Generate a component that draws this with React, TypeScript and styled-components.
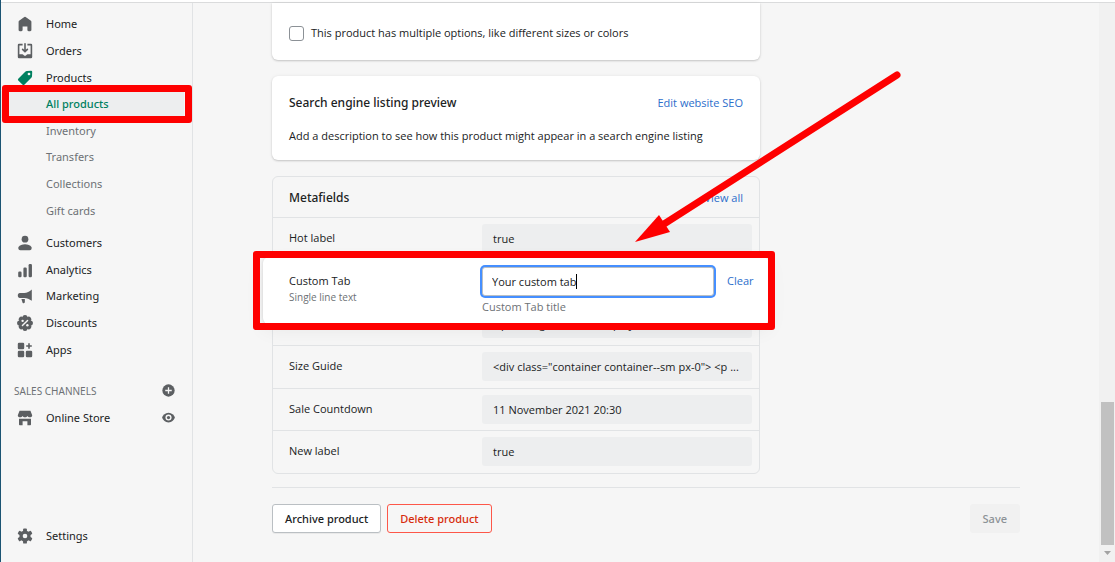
import React from "react";
import styled, { createGlobalStyle } from "styled-components";

const ui = '"Noto Sans", "Open Sans", sans-serif';
const text = '"Open Sans", "Noto Sans", sans-serif';

const GlobalStyle = createGlobalStyle`
  *, *::before, *::after { box-sizing: border-box; }
  body {
    margin: 0;
    background: #f6f6f6;
    color: #202223;
    font: 400 11px/20px ${text};
  }
  h2, p, ul { margin: 0; padding: 0; }
  ul { list-style: none; }
  button, input { font: inherit; color: inherit; }
`;

const Shell = styled.div`
  display: flex;
  flex-direction: column;
  min-height: 100vh;
  border-left: 1px solid #1b5473;
`;

const TopBar = styled.header`
  flex: none;
  height: 3px;
  background: #fff;
  border-bottom: 1px solid #dadbdc;
`;

const Columns = styled.div`
  flex: 1;
  display: flex;
`;

const Sidebar = styled.nav`
  flex: none;
  width: 192px;
  display: flex;
  flex-direction: column;
  padding: 8px 0 13px;
  border-right: 1px solid #e1e3e5;
  font-family: ${ui};
`;

const NavList = styled.ul<{ $height: number }>`
  display: grid;
  grid-auto-rows: 1fr;
  height: ${(p) => p.$height}px;
`;

const NavGroup = styled.div`
  display: flex;
  flex-direction: column;
  gap: 6px;
`;

const NavItem = styled.li`
  position: relative;
  display: flex;
`;

const NavLink = styled.a<{ $sub?: boolean; $selected?: boolean }>`
  flex: 1;
  display: flex;
  align-items: center;
  padding-left: ${(p) => (p.$sub ? 45 : 16)}px;
  margin-right: ${(p) => (p.$selected ? 8 : 0)}px;
  gap: 13px;
  color: ${(p) => (p.$selected ? "#008060" : p.$sub ? "#6d7175" : "#202223")};
  font-weight: ${(p) => (p.$selected ? 500 : 400)};
  background: ${(p) => (p.$selected ? "#edeeef" : "none")};
  text-decoration: none;
`;

const Highlight = styled.span`
  position: absolute;
  inset: -6px 0 -5px 1px;
  border: 7px solid #fe0000;
  border-radius: 3px;
  pointer-events: none;
`;

const Channels = styled.section`
  margin-top: 14px;
`;

const ChannelRow = styled.div`
  display: flex;
  height: 27px;
  align-items: center;
  padding-right: 17px;
`;

const ChannelTitle = styled.h2`
  flex: 1;
  padding-left: 13px;
  font-size: 10px;
  font-weight: 400;
  color: #6d7175;
  text-transform: uppercase;
`;

const IconButton = styled.button`
  display: flex;
  padding: 0;
  border: 0;
  background: none;
`;

const Bottom = styled.div`
  display: flex;
  height: 27px;
  margin-top: auto;
`;

const Icon = styled.svg<{ $green?: boolean; $size?: number }>`
  flex: none;
  width: ${(p) => p.$size ?? 16}px;
  height: ${(p) => p.$size ?? 16}px;
  fill: ${(p) => (p.$green ? "#008060" : "#5c5f62")};
`;

const Main = styled.main`
  flex: 1;
  padding: 0 79px 28px;
`;

const Page = styled.div`
  position: relative;
  max-width: 748px;
  margin: 0 auto;
`;

const Stack = styled.div`
  display: flex;
  flex-direction: column;
  gap: 16px;
  max-width: 488px;
`;

const Card = styled.section<{ $cut?: boolean }>`
  background: #fff;
  padding: ${(p) => (p.$cut ? "20px 17px 17px" : "17px 17px 14px")};
  border-radius: ${(p) => (p.$cut ? "0 0 6px 6px" : "6px")};
  box-shadow: 0 1px 2px rgba(23, 24, 24, 0.2), 0 0 4px rgba(23, 24, 24, 0.05);
`;

const Option = styled.label`
  display: flex;
  align-items: center;
  gap: 7px;
`;

const Checkbox = styled.input`
  appearance: none;
  width: 15px;
  height: 15px;
  margin: 0;
  border: 1px solid #8c9196;
  border-radius: 3px;
  background: #fff;
`;

const Header = styled.div`
  display: flex;
  align-items: center;
  justify-content: space-between;
`;

const Title = styled.h2`
  font: 500 12px/20px ${ui};
`;

const Link = styled.a`
  color: #2c6ecb;
  text-decoration: none;
`;

const Description = styled.p`
  margin-top: 13px;
`;

const Metafields = styled.section`
  border: 1px solid #e1e3e5;
  border-radius: 6px;

  ${Header} {
    height: 40px;
    padding: 2px 16px 0;
  }
`;

const FieldList = styled.ul`
  display: grid;
  grid-auto-rows: 1fr;
  height: 256px;
`;

const Field = styled.li`
  position: relative;
  display: grid;
  grid-template-columns: 193px minmax(0, 1fr);
  align-items: start;
  padding: 6px 7px 0 16px;
  border-top: 1px solid #e1e3e5;
  line-height: 27px;
`;

const Value = styled.div`
  height: 29px;
  padding: 0 11px;
  border-radius: 3px;
  background: #edeeef;
  line-height: 29px;
  white-space: nowrap;
`;

const Editor = styled.div`
  position: absolute;
  z-index: 1;
  inset: -4px -10px auto -10px;
  height: 67px;
  display: grid;
  grid-template-columns: 193px minmax(0, 232px) auto;
  align-items: start;
  padding: 10px 0 0 26px;
  border-radius: 6px;
  background: #fff;
  box-shadow: 0 0 3px rgba(23, 24, 24, 0.15), 0 6px 20px rgba(23, 24, 24, 0.06);
  line-height: 16px;

  ${Link} {
    margin: 6px 0 0 13px;
  }
`;

const EditorMark = styled(Highlight)`
  inset: -6px -6px -6px -10px;
`;

const FieldLabel = styled.label`
  padding-top: 6px;
`;

const FieldType = styled.span`
  display: block;
  font-size: 10px;
  color: #6d7175;
`;

const InputFrame = styled.div`
  display: flex;
  align-items: center;
  height: 29px;
  padding: 1px 9px 0;
  border: 1px solid #babfc3;
  border-radius: 3px;
  background: #fff;
  box-shadow: 0 0 0 2px #458fff;
`;

const TextInput = styled.input`
  field-sizing: content;
  padding: 0;
  border: 0;
  outline: 0;
  background: none;
`;

const Caret = styled.span`
  width: 1px;
  height: 15px;
  background: #000;
`;

const Help = styled.p`
  margin-top: 3px;
  color: #6d7175;
`;

const Footer = styled.footer`
  display: flex;
  gap: 6px;
  margin-top: 13px;
  padding-top: 16px;
  border-top: 1px solid #e1e3e5;
`;

const Button = styled.button<{ $tone?: "danger" | "muted" }>`
  height: 29px;
  border: 1px solid
    ${(p) => (p.$tone === "danger" ? "#fd5749" : p.$tone === "muted" ? "#f1f1f1" : "#babfc3")};
  border-radius: 3px;
  background: ${(p) => (p.$tone === "danger" ? "none" : p.$tone === "muted" ? "#f1f1f1" : "#fff")};
  color: ${(p) => (p.$tone === "danger" ? "#d72c0d" : p.$tone === "muted" ? "#8c9196" : "#202223")};
  box-shadow: ${(p) => (p.$tone ? "none" : "0 1px 0 rgba(0, 0, 0, 0.05)")};
  margin-left: ${(p) => (p.$tone === "muted" ? "auto" : "0")};
  font-family: ${ui};
  font-weight: 500;
  line-height: 16px;
  padding: 0 12px;
`;

const Arrow = styled.svg`
  position: absolute;
  z-index: 2;
  top: 66px;
  left: 360px;
  width: 272px;
  height: 178px;
  pointer-events: none;
`;

const ScrollTrack = styled.div`
  flex: none;
  width: 16px;
  display: flex;
  flex-direction: column;
  justify-content: flex-end;
  align-items: center;
  background: #f1f1f1;
`;

const ScrollThumb = styled.div`
  width: 13px;
  height: 143px;
  background: #c1c1c1;
`;

const ScrollArrow = styled.svg`
  width: 17px;
  height: 17px;
  fill: #a3a3a3;
`;

const icons: Record<string, React.ReactNode> = {
  home: (
    <path d="M18 7.261V17.5c0 .841-.672 1.5-1.5 1.5h-2c-.828 0-1.5-.659-1.5-1.5V13H7v4.477C7 18.318 6.328 19 5.5 19h-2c-.828 0-1.5-.682-1.5-1.523V7.261a1.5 1.5 0 0 1 .615-1.21l6.59-4.82a1.481 1.481 0 0 1 1.59 0l6.59 4.82A1.5 1.5 0 0 1 18 7.26z" />
  ),
  orders: (
    <>
      <path d="M11 1a1 1 0 1 0-2 0v7.586L7.707 7.293a1 1 0 0 0-1.414 1.414l3 3a1 1 0 0 0 1.414 0l3-3a1 1 0 0 0-1.414-1.414L11 8.586V1z" />
      <path d="M3 14V3h4V1H2.5A1.5 1.5 0 0 0 1 2.5v15A1.5 1.5 0 0 0 2.5 19h15a1.5 1.5 0 0 0 1.5-1.5v-15A1.5 1.5 0 0 0 17.5 1H13v2h4v11h-3.5c-.775 0-1.388.662-1.926 1.244l-.11.12A1.994 1.994 0 0 1 10 16a1.994 1.994 0 0 1-1.463-.637l-.111-.12C7.888 14.664 7.275 14 6.5 14H3z" />
    </>
  ),
  products: (
    <path
      fillRule="evenodd"
      d="M10.3 2.1A3 3 0 0 1 12.4 1.2L17.4 1A1.5 1.5 0 0 1 19 2.6L18.8 7.6A3 3 0 0 1 17.9 9.7L9.2 18.4A1.6 1.6 0 0 1 7 18.4L1.6 13A1.6 1.6 0 0 1 1.6 10.8zM15 6.7A1.7 1.7 0 1 0 15 3.3 1.7 1.7 0 0 0 15 6.7z"
    />
  ),
  customers: (
    <>
      <circle cx="10" cy="5.2" r="4.2" />
      <path d="M1.900 15C3.400 12.800 6.500 11.600 10 11.600s6.600 1.200 8.100 3.400c.9 1.800-.3 4-2.400 4H4.300c-2.100 0-3.300-2.200-2.400-4z" />
    </>
  ),
  analytics: (
    <>
      <rect x="1.500" y="12" width="4.200" height="7" rx="1.500" />
      <rect x="8" y="7" width="4.200" height="12" rx="1.500" />
      <rect x="14.500" y="2.500" width="4.200" height="16.500" rx="1.500" />
    </>
  ),
  marketing: (
    <>
      <path d="M18.500 2v14c-3-2.200-6-3.400-9.500-3.600H3.500C2 12.400 1 11.200 1 9.500S2 6.400 3.500 6.400H9C12.500 6 15.500 4.600 18.500 2z" />
      <path d="M5.500 13.600h4.300v4c0 1-.5 1.400-1.400 1.400-1 0-1.400-.5-1.600-1.200z" />
    </>
  ),
  discounts: (
    <>
      {[0, 45, 90, 135, 180, 225, 270, 315].map((a) => (
        <circle key={a} cx="10" cy="3.3" r="3.2" transform={`rotate(${a} 10 10)`} />
      ))}
      <circle cx="10" cy="10" r="7.5" />
      <path d="M6.800 13.200l6.400-6.400" stroke="#f6f6f6" strokeWidth="1.8" strokeLinecap="round" />
      <circle cx="7" cy="7.3" r="1.5" fill="#f6f6f6" />
      <circle cx="13" cy="12.9" r="1.5" fill="#f6f6f6" />
    </>
  ),
  apps: (
    <>
      <rect x="1" y="1" width="8" height="8" rx="1.5" />
      <rect x="1" y="11" width="8" height="8" rx="1.5" />
      <rect x="11" y="11" width="8" height="8" rx="1.5" />
      <path d="M14 1.500h2V4h2.500v2H16v2.500h-2V6h-2.500V4H14z" />
    </>
  ),
  store: (
    <>
      <path d="M3.200 1h13.600L19 6.500c0 1.700-1.200 2.700-2.700 2.700S13.500 8.400 13 7.500c-.5 1-1.600 1.700-3 1.700S7.500 8.500 7 7.500C6.500 8.400 5.200 9.200 3.700 9.200S1 8.200 1 6.500z" />
      <path d="M2.500 11h15v6.700c0 .8-.5 1.300-1.300 1.300H13v-5H7v5H3.800c-.8 0-1.300-.5-1.300-1.300z" />
    </>
  ),
  settings: (
    <>
      {[0, 60, 120].map((a) => (
        <rect key={a} x="7.6" y="0.5" width="4.8" height="19" rx="1.2" transform={`rotate(${a} 10 10)`} />
      ))}
      <circle cx="10" cy="10" r="7" />
      <circle cx="10" cy="10" r="2.9" fill="#f6f6f6" />
    </>
  ),
  add: (
    <>
      <circle cx="10" cy="10" r="9.5" />
      <path d="M9 5h2v4h4v2h-4v4H9v-4H5V9h4z" fill="#f6f6f6" />
    </>
  ),
  view: (
    <>
      <path d="M10 2.500c5 0 8.300 3.600 9.600 6.800.2.500.2.900 0 1.400-1.300 3.200-4.600 6.800-9.600 6.800S1.700 13.900.4 10.700c-.2-.5-.2-.9 0-1.400C1.700 6.100 5 2.500 10 2.500z" />
      <circle cx="10" cy="10" r="4.7" fill="#f6f6f6" />
      <circle cx="10" cy="10" r="2.5" />
    </>
  ),
};

const Glyph = ({ name, size, green }: { name: string; size?: number; green?: boolean }) => (
  <Icon viewBox="0 0 20 20" $size={size} $green={green} aria-hidden="true">
    {icons[name]}
  </Icon>
);

type Entry = { label: string; icon?: string; selected?: boolean };

const catalog: Entry[] = [
  { label: "Home", icon: "home" },
  { label: "Orders", icon: "orders" },
  { label: "Products", icon: "products" },
  { label: "All products", selected: true },
  { label: "Inventory" },
  { label: "Transfers" },
  { label: "Collections" },
  { label: "Gift cards" },
];

const business: Entry[] = [
  { label: "Customers", icon: "customers" },
  { label: "Analytics", icon: "analytics" },
  { label: "Marketing", icon: "marketing" },
  { label: "Discounts", icon: "discounts" },
  { label: "Apps", icon: "apps" },
];

const Entries = ({ items, height }: { items: Entry[]; height: number }) => (
  <NavList $height={height}>
    {items.map((item) => (
      <NavItem key={item.label}>
        <NavLink href="#" $sub={!item.icon} $selected={item.selected}>
          {item.icon && <Glyph name={item.icon} green={item.icon === "products"} />}
          {item.label}
        </NavLink>
        {item.selected && <Highlight />}
      </NavItem>
    ))}
  </NavList>
);

const fields = [
  { label: "Hot label", value: "true" },
  { label: "Custom Tab", value: "" },
  { label: "Custom Tab Content", value: "Upcoming details to display" },
  { label: "Size Guide", value: '<div class="container container--sm px-0"> <p ...' },
  { label: "Sale Countdown", value: "11 November 2021 20:30" },
  { label: "New label", value: "true" },
];

const FieldEditor = () => (
  <Editor>
    <FieldLabel htmlFor="custom-tab">
      Custom Tab
      <FieldType>Single line text</FieldType>
    </FieldLabel>
    <div>
      <InputFrame>
        <TextInput id="custom-tab" defaultValue="Your custom tab" />
        <Caret />
      </InputFrame>
      <Help>Custom Tab title</Help>
    </div>
    <Link href="#">Clear</Link>
    <EditorMark />
  </Editor>
);

export default function App() {
  return (
    <>
      <GlobalStyle />
      <Shell>
        <TopBar />
        <Columns>
          <Sidebar>
            <NavGroup>
              <Entries items={catalog} height={213} />
              <Entries items={business} height={133} />
            </NavGroup>
            <Channels>
              <ChannelRow>
                <ChannelTitle>Sales channels</ChannelTitle>
                <IconButton aria-label="Add sales channel">
                  <Glyph name="add" size={13} />
                </IconButton>
              </ChannelRow>
              <ChannelRow>
                <NavLink href="#">
                  <Glyph name="store" />
                  Online Store
                </NavLink>
                <IconButton aria-label="View your online store">
                  <Glyph name="view" size={13} />
                </IconButton>
              </ChannelRow>
            </Channels>
            <Bottom>
              <NavLink href="#">
                <Glyph name="settings" />
                Settings
              </NavLink>
            </Bottom>
          </Sidebar>
          <Main>
            <Page>
              <Stack>
                <Card $cut>
                  <Option>
                    <Checkbox type="checkbox" />
                    This product has multiple options, like different sizes or colors
                  </Option>
                </Card>
                <Card>
                  <Header>
                    <Title>Search engine listing preview</Title>
                    <Link href="#">Edit website SEO</Link>
                  </Header>
                  <Description>
                    Add a description to see how this product might appear in a search engine listing
                  </Description>
                </Card>
                <Metafields>
                  <Header>
                    <Title>Metafields</Title>
                    <Link href="#">View all</Link>
                  </Header>
                  <FieldList>
                    {fields.map((field) => (
                      <Field key={field.label}>
                        {field.value ? (
                          <>
                            <span>{field.label}</span>
                            <Value>{field.value}</Value>
                          </>
                        ) : (
                          <FieldEditor />
                        )}
                      </Field>
                    ))}
                  </FieldList>
                </Metafields>
              </Stack>
              <Footer>
                <Button>Archive product</Button>
                <Button $tone="danger">Delete product</Button>
                <Button $tone="muted" disabled>
                  Save
                </Button>
              </Footer>
              <Arrow viewBox="632 69 272 178" aria-hidden="true">
                <path d="M897 75L664 224" stroke="#fe0000" strokeWidth="7" strokeLinecap="round" />
                <path d="M635 242L659 215L670 232z" fill="#fe0000" />
              </Arrow>
            </Page>
          </Main>
          <ScrollTrack>
            <ScrollThumb />
            <ScrollArrow viewBox="0 0 17 17">
              <path d="M5 6h7l-3.500 4z" />
            </ScrollArrow>
          </ScrollTrack>
        </Columns>
      </Shell>
    </>
  );
}
